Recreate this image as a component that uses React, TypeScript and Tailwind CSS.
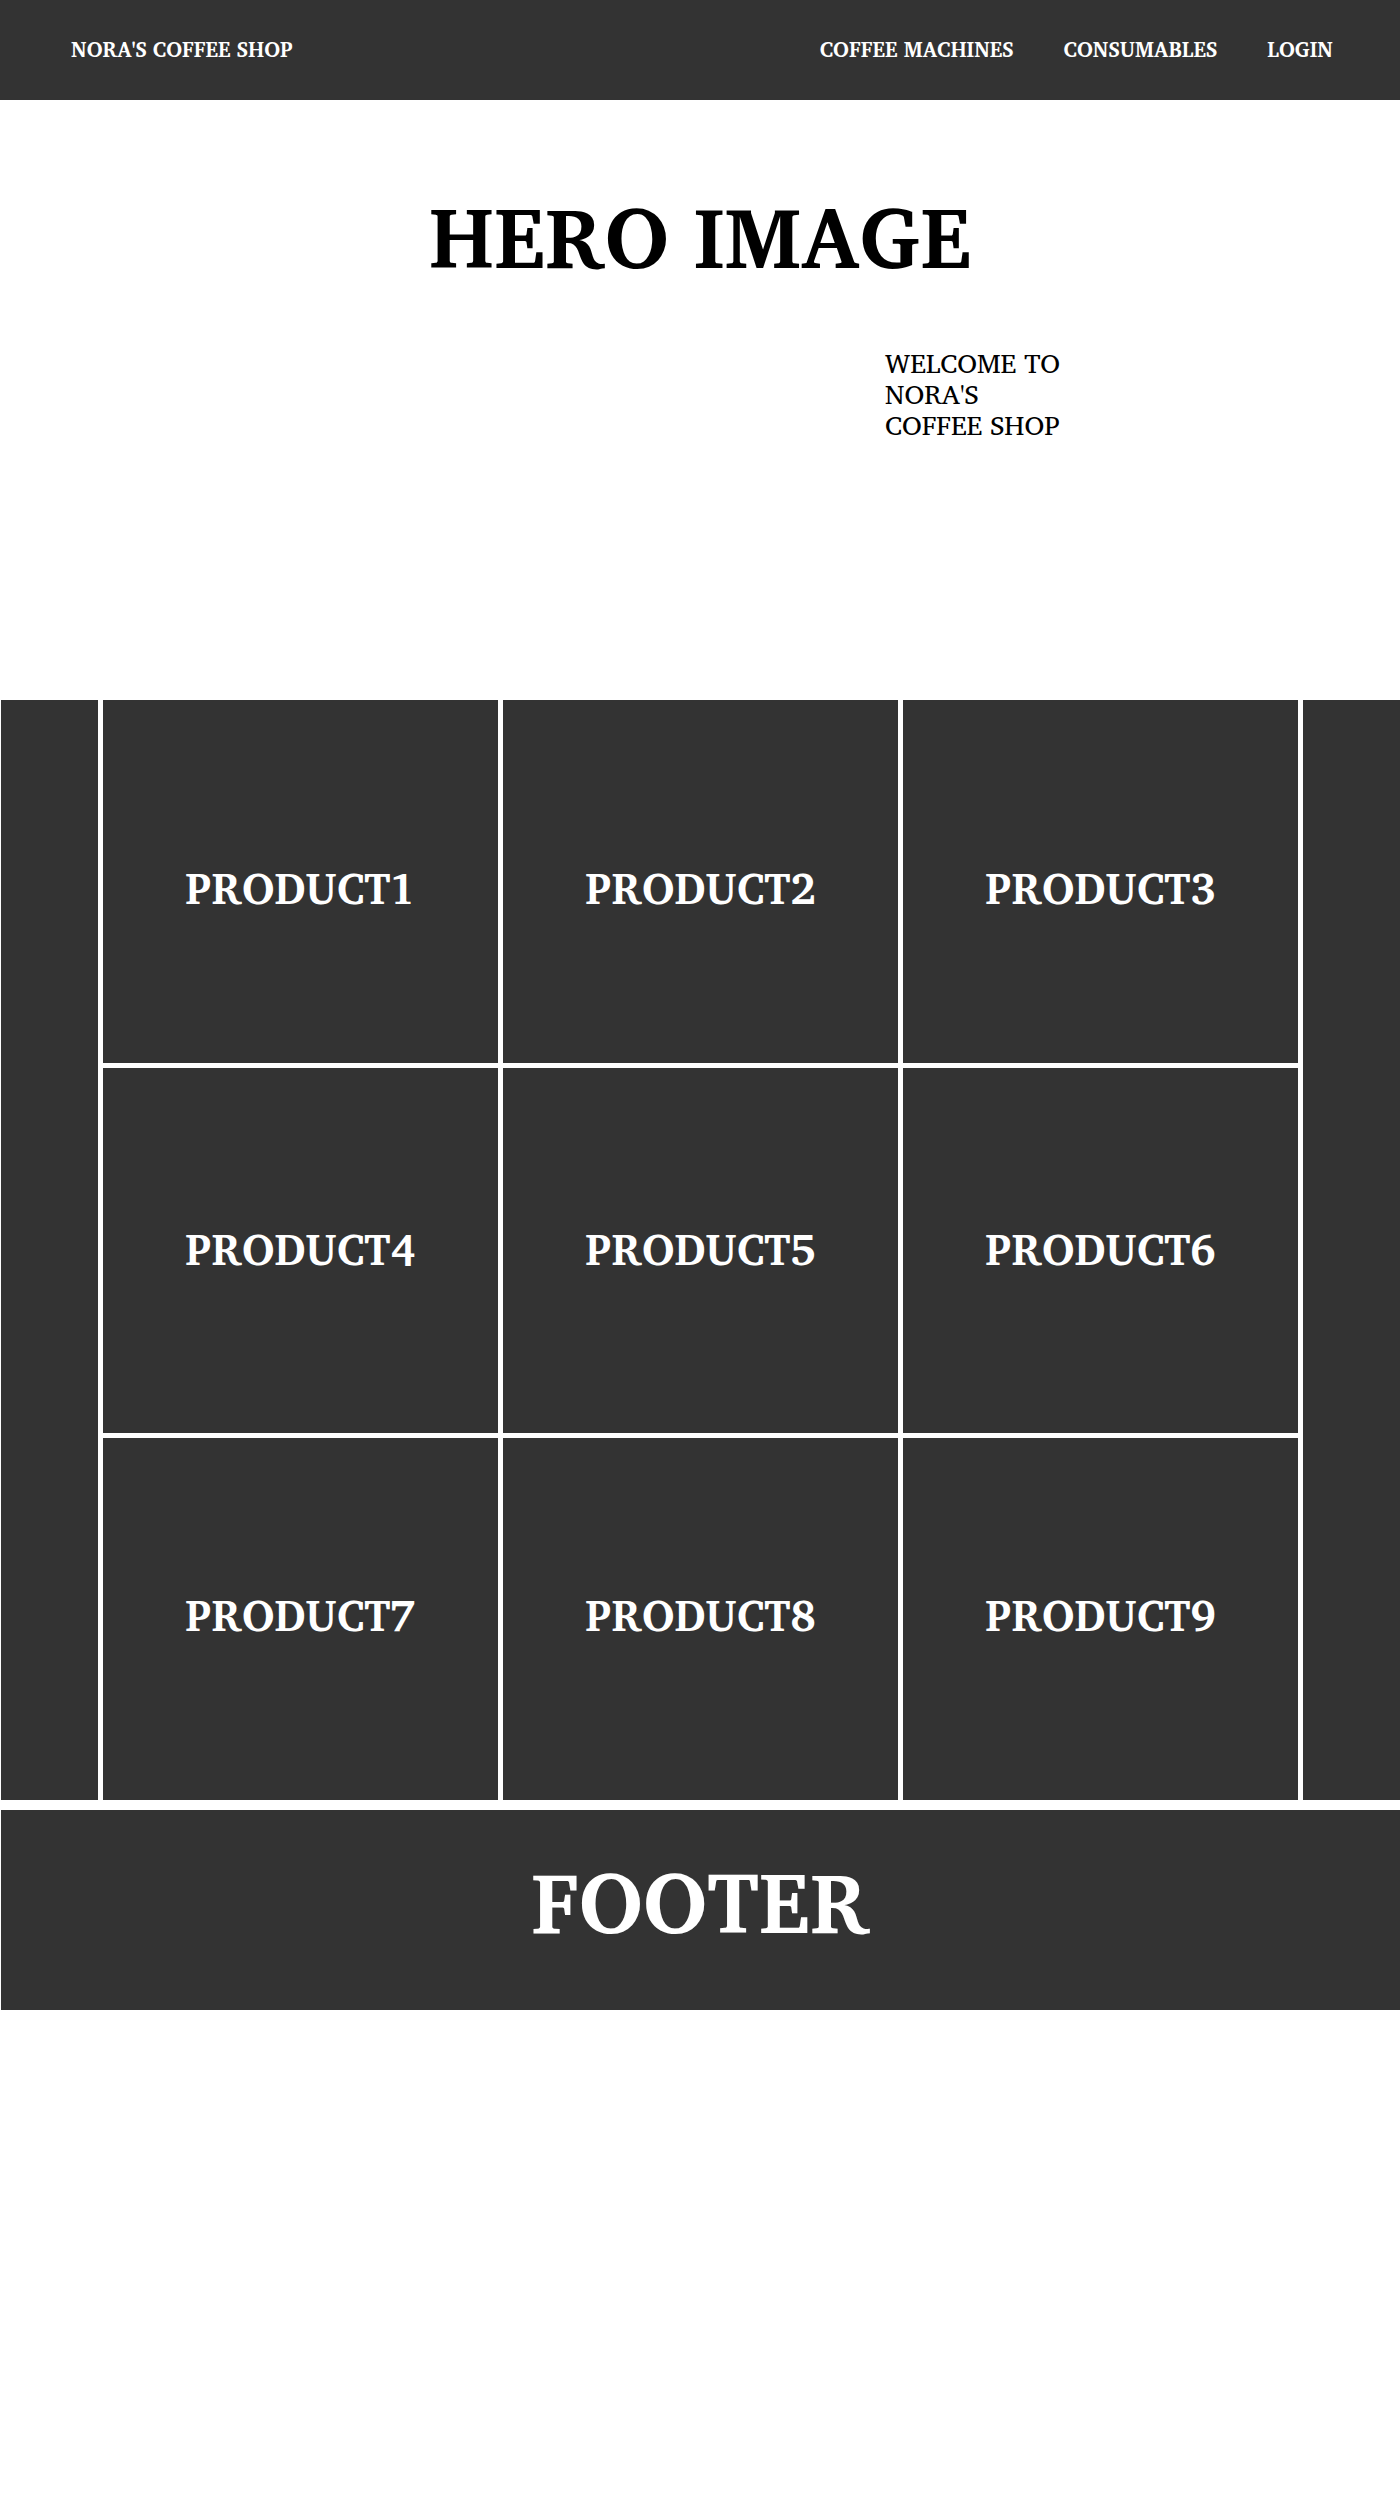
const links = [
  { label: 'COFFEE MACHINES', href: '#coffee-machines' },
  { label: 'CONSUMABLES', href: '#consumables' },
  { label: 'LOGIN', href: '#login' },
];

const rows = [
  { pad: 'pt-3', products: ['PRODUCT1', 'PRODUCT2', 'PRODUCT3'] },
  { pad: 'pb-1', products: ['PRODUCT4', 'PRODUCT5', 'PRODUCT6'] },
  { pad: 'pb-2', products: ['PRODUCT7', 'PRODUCT8', 'PRODUCT9'] },
];

function Header() {
  return (
    <header className="flex min-h-[100px] items-center justify-between bg-[#333333] pr-[67px] pl-[71px] text-[21px] font-bold text-white">
      <a href="#home">NORA'S COFFEE SHOP</a>
      <nav className="flex gap-[50px]">
        {links.map((link) => (
          <a key={link.href} href={link.href}>
            {link.label}
          </a>
        ))}
      </nav>
    </header>
  );
}

function Hero() {
  return (
    <section className="min-h-[600px] pt-[76px]">
      <h1 className="text-center text-[85px] leading-[120px] font-bold">HERO IMAGE</h1>
      <p className="ml-[885px] pt-[52px] text-[27px] leading-[31px] font-medium">
        WELCOME TO
        <br />
        NORA'S
        <br />
        COFFEE SHOP
      </p>
    </section>
  );
}

function Products() {
  return (
    <main className="grid grid-cols-[97fr_1195fr_97fr] gap-[5px] pl-px">
      <aside className="bg-[#333333]" />
      <div className="grid min-h-[1100px] grid-rows-[363fr_365fr_362fr] gap-[5px]">
        {rows.map((row) => (
          <div key={row.products[0]} className="grid grid-cols-3 gap-[5px]">
            {row.products.map((name) => (
              <article
                key={name}
                className={`flex items-center justify-center bg-[#333333] ${row.pad}`}
              >
                <h2 className="text-[43px] leading-[56px] font-bold text-white">{name}</h2>
              </article>
            ))}
          </div>
        ))}
      </div>
      <aside className="bg-[#333333]" />
    </main>
  );
}

function Footer() {
  return (
    <footer className="mt-[10px] ml-px flex min-h-[200px] items-center justify-center bg-[#333333] pb-[18px] text-[85px] leading-[120px] font-bold text-white">
      FOOTER
    </footer>
  );
}

export default function App() {
  return (
    <div className="bg-white font-['Charis_SIL','DejaVu_Serif_Condensed',serif] text-black">
      <Header />
      <Hero />
      <Products />
      <Footer />
    </div>
  );
}
